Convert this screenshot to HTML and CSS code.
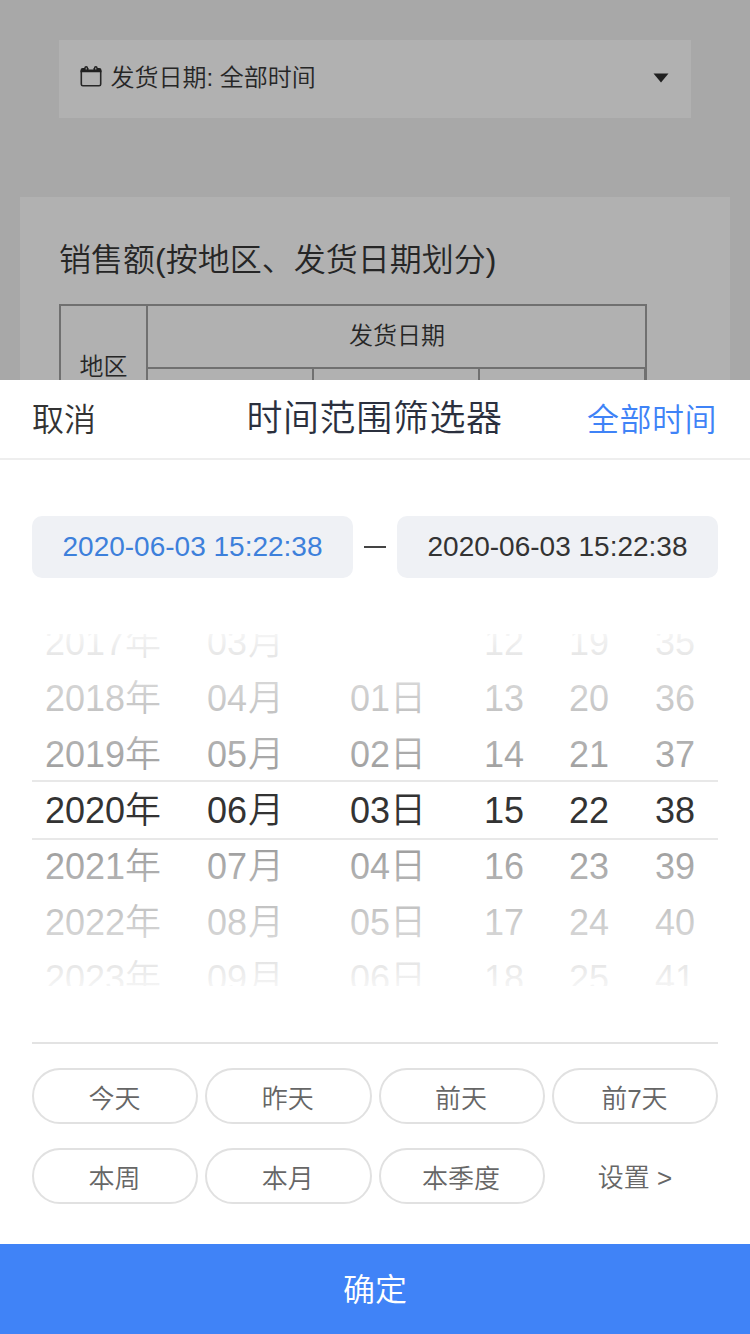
FILE: index.html
```html
<!DOCTYPE html>
<html lang="zh-CN">
<head>
<meta charset="utf-8">
<title>时间范围筛选器</title>
<link rel="stylesheet" href="styles.css">
</head>
<body>
<div class="report">
  <div class="filter">
    <svg class="filter-icon" width="22" height="22" viewBox="0 0 22 22"><path d="M1.300 5V18.200a1.600 1.600 0 0 0 1.600 1.600H19.100a1.600 1.600 0 0 0 1.600-1.600V5" fill="none" stroke="#282828" stroke-width="1.600"/><path d="M.5 6.300V4.200Q.5 2 2.700 2H19.300Q21.500 2 21.500 4.200V6.300Z" fill="#202020"/><path d="M8.500 1.500H13.500V3.500H8.500Z" fill="#b1b1b1"/><path d="M5 4.300V1.900a1.200 1.200 0 0 1 2.400 0V4.300ZM14.600 4.300V1.900a1.200 1.200 0 0 1 2.400 0V4.300Z" fill="#b1b1b1" stroke="#202020" stroke-width="1.400"/></svg>
    <span class="filter-text">发货日期: 全部时间</span>
    <svg class="caret" width="16" height="10" viewBox="0 0 16 10"><path d="M.5 .5H15.500L8 9.500Z" fill="#202020"/></svg>
  </div>
  <div class="card">
    <div class="card-title">销售额(按地区、发货日期划分)</div>
    <div class="table">
      <div class="row-head">地区</div>
      <div class="col-group">
        <div class="col-head">发货日期</div>
        <div class="cols"><div></div><div></div><div></div></div>
      </div>
    </div>
  </div>
</div>
<div class="sheet">
  <div class="head">
    <span class="cancel">取消</span>
    <span class="title">时间范围筛选器</span>
    <span class="all">全部时间</span>
  </div>
  <div class="range">
    <div class="date active">2020-06-03 15:22:38</div>
    <div class="dash"></div>
    <div class="date">2020-06-03 15:22:38</div>
  </div>
  <div class="picker">
    <div class="wheel"><p>2017年</p><p>2018年</p><p>2019年</p><p>2020年</p><p>2021年</p><p>2022年</p><p>2023年</p></div>
    <div class="wheel month"><p>03<i>月</i></p><p>04<i>月</i></p><p>05<i>月</i></p><p>06<i>月</i></p><p>07<i>月</i></p><p>08<i>月</i></p><p>09<i>月</i></p></div>
    <div class="wheel"><p></p><p>01日</p><p>02日</p><p>03日</p><p>04日</p><p>05日</p><p>06日</p></div>
    <div class="wheel"><p>12</p><p>13</p><p>14</p><p>15</p><p>16</p><p>17</p><p>18</p></div>
    <div class="wheel"><p>19</p><p>20</p><p>21</p><p>22</p><p>23</p><p>24</p><p>25</p></div>
    <div class="wheel"><p>35</p><p>36</p><p>37</p><p>38</p><p>39</p><p>40</p><p>41</p></div>
    <div class="mask"><div class="fade-top"></div><div class="current"></div><div class="fade-bottom"></div></div>
  </div>
  <div class="presets">
    <div class="pill">今天</div><div class="pill">昨天</div><div class="pill">前天</div><div class="pill">前7天</div>
    <div class="pill">本周</div><div class="pill">本月</div><div class="pill">本季度</div><div class="settings">设置 &gt;</div>
  </div>
</div>
<div class="confirm">确定</div>
</body>
</html>
```
FILE: styles.css
```css
* { box-sizing: border-box; margin: 0; padding: 0; }
body {
  width: 750px; height: 1334px; overflow: hidden;
  display: flex; flex-direction: column;
  font-family: "Liberation Sans", "Noto Sans CJK SC DemiLight", "Noto Sans CJK SC", sans-serif;
  font-weight: 350; color: #333; background: #fff;
}
.report { height: 380px; flex: none; overflow: hidden; background: #a8a8a8; padding: 40px 20px 0; color: #262626; }
.filter { height: 78px; margin: 0 39px; background: #b1b1b1; display: flex; align-items: center; padding: 0 22px 0 21px; font-size: 24px; }
.filter-icon { flex: none; margin: 0 8.500px 4px 0; }
.filter-text { flex: 1; line-height: 36px; margin-bottom: 2px; }
.caret { flex: none; margin-bottom: 3px; }
.card { margin-top: 79px; height: 400px; background: #b1b1b1; padding: 39px 39px 0; }
.card-title { font-size: 32px; line-height: 48px; height: 68px; white-space: nowrap; }
.table { display: flex; width: 588px; height: 200px; border: 2px solid #707070; font-size: 24px; line-height: 36px; text-align: center; }
.row-head { flex: 0 0 87px; border-right: 2px solid #707070; padding-top: 43px; }
.col-group { flex: 1; display: flex; flex-direction: column; }
.col-head { height: 63px; border-bottom: 2px solid #707070; padding-top: 12px; }
.cols { flex: 1; display: flex; }
.cols div { flex: 0 0 166px; border-right: 2px solid #707070; }
.sheet { flex: none; height: 864px; background: #fff; }
.head { height: 80px; border-bottom: 2px solid #eee; padding: 0 32px 4px; display: flex; align-items: center; justify-content: space-between; font-size: 32px; }
.cancel { width: 130px; }
.title { font-size: 36px; letter-spacing: .6px; color: #2b303e; padding-bottom: 4px; }
.all { width: 131px; letter-spacing: .5px; color: #3f83f7; white-space: nowrap; }
.range { display: flex; align-items: center; justify-content: space-between; margin: 56px 32px; height: 62px; }
.date { width: 321px; height: 62px; line-height: 62px; border-radius: 10px; background: #eff1f5; font-size: 28px; text-align: center; }
.date.active { color: #3d80db; }
.dash { width: 22px; height: 2px; background: #444; }
.picker {
  position: relative; display: grid; grid-template-columns: 162px 143px 134px 85px 86px 1fr;
  height: 352px; margin: 0 32px; padding-left: 13px; overflow: hidden; align-content: center;
}
.wheel { font-size: 36px; white-space: nowrap; }
.month i { font-style: normal; margin-left: 1px; }
.wheel p { height: 56px; line-height: 57px; }
.mask { position: absolute; inset: 0; display: flex; flex-direction: column; }
.fade-top, .fade-bottom { flex: 1; background: linear-gradient(rgba(255,255,255,.95), rgba(255,255,255,.5)); }
.fade-bottom { background: linear-gradient(rgba(255,255,255,.5), rgba(255,255,255,.95)); }
.current { height: 60px; border: solid #e8e8e8; border-width: 2px 0; }
.presets { display: grid; grid-template-columns: repeat(4, 1fr); gap: 24px 7px; margin: 56px 32px 0; padding-top: 24px; border-top: 2px solid #e3e3e3; font-size: 26px; color: #666; text-align: center; }
.pill { height: 56px; line-height: 59px; border: 2px solid #e1e1e1; border-radius: 28px; padding-right: 1px; }
.settings { height: 56px; line-height: 60px; }
.confirm { flex: none; height: 90px; line-height: 93px; background: #4083f7; color: #fff; font-size: 32px; text-align: center; }
```
